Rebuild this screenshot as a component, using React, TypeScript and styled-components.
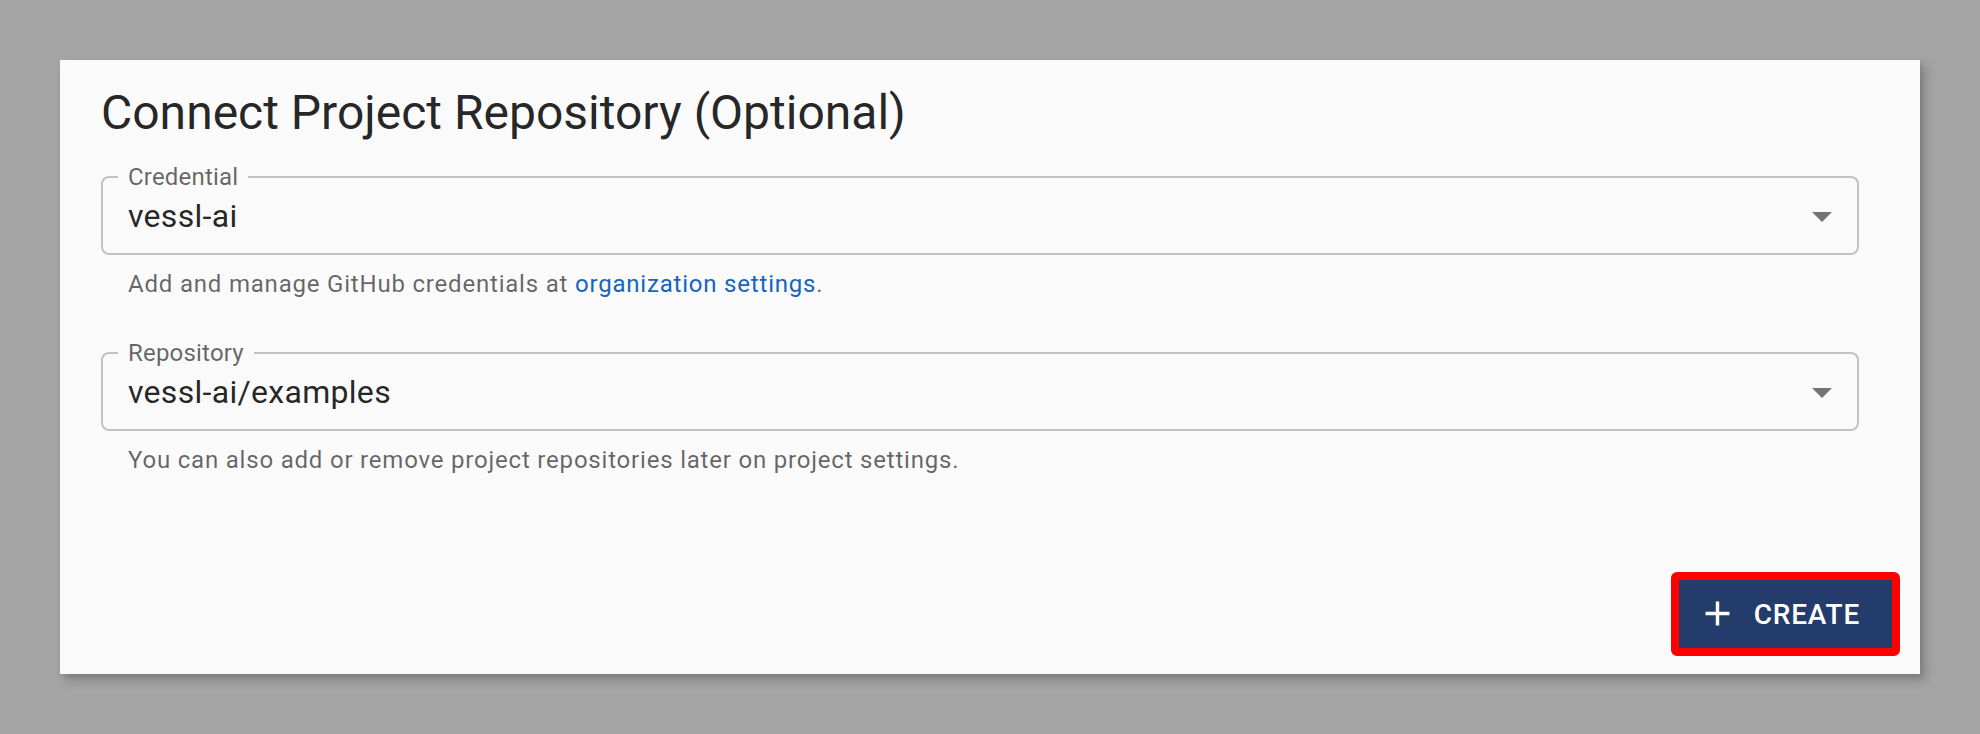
import React from 'react'
import styled, { createGlobalStyle } from 'styled-components'

const GlobalStyle = createGlobalStyle`
  html, body {
    margin: 0;
    padding: 0;
    background: #a4a4a4;
  }
  body {
    font-family: Roboto, "Noto Sans", "Liberation Sans", sans-serif;
  }
`

const Page = styled.div`
  width: 1980px;
  height: 734px;
  padding: 60px 0 0 60px;
  box-sizing: border-box;
`

const Card = styled.div`
  width: 1860px;
  height: 614px;
  box-sizing: border-box;
  background: #fafafa;
  box-shadow: 5px 6px 10px rgba(0, 0, 0, 0.2), 2px 3px 4px rgba(0, 0, 0, 0.08);
  display: flex;
  flex-direction: column;
  padding: 22px 0 18px 0;
`

const Content = styled.div`
  padding: 0 61px 0 41px;
  display: flex;
  flex-direction: column;
  flex: 1;
`

const Title = styled.h2`
  margin: 0;
  font-size: 48px;
  font-weight: 400;
  line-height: 61px;
  color: rgba(0, 0, 0, 0.87);
`

const FieldGroup = styled.div<{ $gap: number }>`
  margin-top: ${p => p.$gap}px;
`

const Outline = styled.fieldset`
  margin: 0;
  padding: 0 11px 0 25px;
  border: 2px solid #c2c2c2;
  border-radius: 8px;
  min-width: 0;
`

const Legend = styled.legend`
  margin-left: -10px;
  padding: 0 10px;
  font-size: 24px;
  line-height: 24px;
  letter-spacing: 0.2px;
  color: rgba(0, 0, 0, 0.6);
`

const ValueRow = styled.div`
  display: flex;
  align-items: center;
  justify-content: space-between;
  height: 46px;
  margin: 4px 0 14px 0;
`

const Value = styled.span`
  font-size: 32px;
  line-height: 46px;
  letter-spacing: 0.3px;
  color: rgba(0, 0, 0, 0.87);
`

const Arrow = styled.svg`
  width: 48px;
  height: 48px;
  fill: rgba(0, 0, 0, 0.54);
  flex-shrink: 0;
`

const Helper = styled.p`
  margin: 9px 0 0 27px;
  font-size: 24px;
  line-height: 40px;
  letter-spacing: 0.8px;
  color: rgba(0, 0, 0, 0.6);
`

const Link = styled.a`
  color: #1565c0;
  text-decoration: none;
`

const Footer = styled.div`
  display: flex;
  justify-content: flex-end;
  padding-right: 20px;
`

const CreateButton = styled.button`
  display: flex;
  align-items: center;
  height: 84px;
  box-sizing: border-box;
  padding: 0 32px 0 18px;
  border: 8px solid #ff0000;
  border-radius: 6px;
  background: #233c6b;
  color: #fff;
  font-family: Roboto, "Noto Sans", sans-serif;
  font-size: 28px;
  font-weight: 500;
  letter-spacing: 0.8px;
  text-transform: uppercase;
  cursor: pointer;

  svg {
    width: 41px;
    height: 41px;
    fill: #fff;
    margin-right: 16px;
    margin-top: -2px;
  }
`

const SelectField = ({ label, value, helper }: { label: string; value: string; helper: React.ReactNode }) => (
  <>
    <Outline>
      <Legend>{label}</Legend>
      <ValueRow>
        <Value>{value}</Value>
        <Arrow viewBox="0 0 24 24">
          <path d="M7 10l5 5 5-5z" />
        </Arrow>
      </ValueRow>
    </Outline>
    <Helper>{helper}</Helper>
  </>
)

export default function App() {
  return (
    <Page>
      <GlobalStyle />
      <Card>
        <Content>
          <Title>Connect Project Repository (Optional)</Title>
          <FieldGroup $gap={22}>
            <SelectField
              label="Credential"
              value="vessl-ai"
              helper={<>Add and manage GitHub credentials at <Link href="#">organization settings</Link>.</>}
            />
          </FieldGroup>
          <FieldGroup $gap={37}>
            <SelectField
              label="Repository"
              value="vessl-ai/examples"
              helper="You can also add or remove project repositories later on project settings."
            />
          </FieldGroup>
        </Content>
        <Footer>
          <CreateButton>
            <svg viewBox="0 0 24 24">
              <path d="M19 13h-6v6h-2v-6H5v-2h6V5h2v6h6v2z" />
            </svg>
            Create
          </CreateButton>
        </Footer>
      </Card>
    </Page>
  )
}
